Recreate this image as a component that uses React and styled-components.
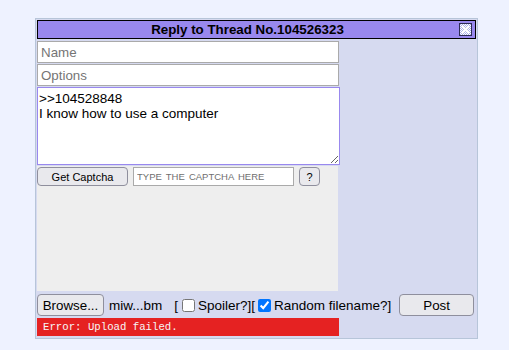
import React from "react";
import styled, { createGlobalStyle } from "styled-components";

const GlobalStyle = createGlobalStyle`
  * { box-sizing: border-box; }
  body {
    margin: 0;
    background: #eef2ff;
    font-family: "Liberation Sans", Arial, sans-serif;
  }
`;

const Page = styled.div`
  padding: 18px 0 0 35px;
`;

const Panel = styled.div`
  width: 443px;
  background: #d6daf0;
  border: 1px solid #b7c5d9;
  padding: 1px 1px 2px 1px;
`;

const Header = styled.div`
  height: 19px;
  background: #9988ee;
  border: 1px solid #000;
  display: flex;
  align-items: center;
  justify-content: center;
  position: relative;
  padding-right: 18px;
  font-weight: bold;
  font-size: 13.33px;
  color: #000;
  margin-bottom: 2px;
`;

const Close = styled.svg`
  position: absolute;
  right: 3px;
  top: 2px;
`;

const Column = styled.div`
  width: 302px;
  display: flex;
  flex-direction: column;
  gap: 1px;
`;

const Field = styled.input`
  height: 22px;
  width: 302px;
  border: 1px solid #aaa;
  background: #fff;
  font: 13.33px "Liberation Sans", Arial, sans-serif;
  padding: 0 3px;
  &::placeholder { color: #757575; }
`;

const Comment = styled.textarea`
  width: 303px;
  height: 78px;
  border: 1px solid #9988ee;
  font: 13.5px/15px "Liberation Sans", Arial, sans-serif;
  padding: 3px 1px;
  resize: both;
  color: #000;
`;

const CaptchaArea = styled.div`
  width: 301px;
  height: 125px;
  background: #eeeeee;
  padding-top: 1px;
  display: flex;
  align-items: flex-start;
`;

const Button = styled.button`
  background: #e9e9ed;
  border: 1px solid #8f8f9d;
  border-radius: 4px;
  color: #000;
  font-family: "Liberation Sans", Arial, sans-serif;
  font-size: ${p => p.$small ? "11px" : "13.33px"};
  width: ${p => p.$w}px;
  height: ${p => p.$h}px;
  margin-left: ${p => p.$ml || 0}px;
  padding: 0;
`;

const CaptchaInput = styled.input`
  width: 161px;
  height: 19px;
  margin-left: 5px;
  border: 1px solid #aaa;
  background: #fff;
  padding: 0 3px;
  font: 9.5px "Liberation Sans", Arial, sans-serif;
  word-spacing: 1.5px;
  &::placeholder { color: #6f6f6f; }
`;

const FileRow = styled.div`
  display: flex;
  align-items: center;
  height: 22px;
  margin-top: 3px;
  font-size: 13.5px;
  color: #000;
`;

const Label = styled.span`
  margin-left: ${p => p.$ml || 0}px;
  white-space: nowrap;
`;

const Check = styled.input`
  width: 13px;
  height: 13px;
  margin: 0 3px 0 ${p => p.$ml || 0}px;
`;

const ErrorBar = styled.div`
  width: 302px;
  height: 18px;
  margin-top: 2px;
  background: #e52222;
  color: #f6f6f6;
  font: 10.7px/18px "Liberation Mono", "Courier New", monospace;
  padding-left: 6px;
`;

export default function App() {
  return (
    <Page>
      <GlobalStyle />
      <Panel>
        <Header>
          Reply to Thread No.104526323
          <Close width="13" height="13" viewBox="0 0 13 13">
            <defs>
              <pattern id="dither" width="2" height="2" patternUnits="userSpaceOnUse">
                <rect width="2" height="2" fill="#ffffff" />
                <rect width="1" height="1" fill="#a9aee6" />
                <rect x="1" y="1" width="1" height="1" fill="#a9aee6" />
              </pattern>
            </defs>
            <rect x="0.5" y="0.5" width="12" height="12" fill="url(#dither)" stroke="#2c2c54" />
            <path d="M3 3 L10 10 M10 3 L3 10" stroke="#ffffff" strokeWidth="2" />
          </Close>
        </Header>
        <Column>
          <Field placeholder="Name" />
          <Field placeholder="Options" />
          <Comment defaultValue={">>104528848\nI know how to use a computer"} />
          <CaptchaArea>
            <Button $small $w={91} $h={19}>Get Captcha</Button>
            <CaptchaInput placeholder="TYPE THE CAPTCHA HERE" />
            <Button $small $w={21} $h={19} $ml={5}>?</Button>
          </CaptchaArea>
        </Column>
        <FileRow>
          <Button $w={67} $h={22}>Browse...</Button>
          <Label $ml={5}>miw...bm</Label>
          <Label $ml={12}>[</Label>
          <Check type="checkbox" $ml={4} />
          <Label>Spoiler?][</Label>
          <Check type="checkbox" defaultChecked $ml={3} />
          <Label>Random filename?]</Label>
          <Button $w={75} $h={22} $ml={8}>Post</Button>
        </FileRow>
        <ErrorBar>Error: Upload failed.</ErrorBar>
      </Panel>
    </Page>
  );
}
